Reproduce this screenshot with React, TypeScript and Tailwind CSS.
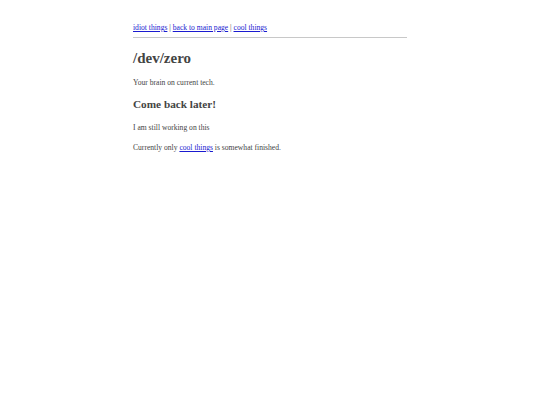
export default function App() {
  return (
    <div className="min-h-[405px] bg-white font-['Liberation_Serif',serif] text-[#444]">
      <div className="ml-[133px] w-[274px] pt-[23px]">
        <nav className="text-[7.6px] leading-[10px]">
          <a href="#" className="text-[#1a1ad0] underline">idiot things</a>
          {' | '}
          <a href="#" className="text-[#1a1ad0] underline">back to main page</a>
          {' | '}
          <a href="#" className="text-[#1a1ad0] underline">cool things</a>
        </nav>
        <hr className="mt-[4px] border-t border-[#c8c8c8]" />
        <h1 className="mt-[10px] text-[15px] font-bold leading-[20px]">/dev/zero</h1>
        <p className="mt-[10px] text-[7.6px] leading-[10px]">Your brain on current tech.</p>
        <h2 className="mt-[9px] text-[11.25px] font-bold leading-[15px]">Come back later!</h2>
        <p className="mt-[11px] text-[7.6px] leading-[10px]">I am still working on this</p>
        <p className="mt-[10px] text-[7.6px] leading-[10px]">
          Currently only <a href="#" className="text-[#1a1ad0] underline">cool things</a> is somewhat finished.
        </p>
      </div>
    </div>
  );
}
